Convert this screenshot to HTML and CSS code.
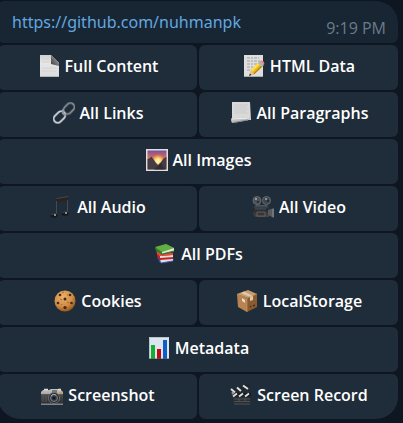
FILE: index.html
```html
<!DOCTYPE html>
<html lang="en">
<head>
<meta charset="utf-8">
<meta name="viewport" content="width=device-width, initial-scale=1">
<title>Scraper bot chat</title>
<link rel="stylesheet" href="styles.css">
</head>
<body>
<main class="chat">
  <article class="message">
    <a class="link" href="https://github.com/nuhmanpk">https://github.com/nuhmanpk</a>
    <time class="time" datetime="21:19">9:19 PM</time>
  </article>
  <div class="keyboard">
    <button type="button" class="key">
      <svg class="icon" viewBox="0 0 22 22" aria-hidden="true">
        <defs><linearGradient id="paper" x1="0" y1="0" x2="0" y2="1"><stop offset="0" stop-color="#cfcfcf"/><stop offset=".35" stop-color="#e6e6e6"/><stop offset="1" stop-color="#dcdcdc"/></linearGradient>
        <linearGradient id="fold" x1="0" y1="1" x2="1" y2="0"><stop offset="0" stop-color="#3c3c3c"/><stop offset=".5" stop-color="#777"/><stop offset="1" stop-color="#c8c8c8"/></linearGradient></defs>
        <path d="M2 0H13L21 8V22H2z" fill="url(#paper)"/>
        <path d="M4 4h7M4 7h8M4 13h14M4 16h14" stroke="#d2d2d2"/>
        <path d="M13 0L21 8V11L13 9z" fill="url(#fold)"/>
        <path d="M2 21.500H21" stroke="#b5b5b5"/>
      </svg>
      <span>Full Content</span>
    </button>
    <button type="button" class="key">
      <svg class="icon" viewBox="0 0 22 22" aria-hidden="true">
        <path d="M1 0H20V22H1z" fill="#dedede"/>
        <path d="M1 21.500H20" stroke="#aaa"/>
        <path d="M4 3h12M4 6h13M4 9h11M4 12h7M4 15h5" stroke="#a0a0a0" stroke-dasharray="3 1 2 1"/>
        <path d="M6 21L8 15L16 7L20 11L11 19z" fill="#e9b91c"/>
        <path d="M8 15L16 7L17.500 8.500L9 17z" fill="#ffdf55"/>
        <path d="M10 19L19 10L20 11L11 19.500z" fill="#b77b0c"/>
        <path d="M6 21L8 15L11 19z" fill="#e3c295"/><path d="M6 21L7 18.500L8.500 20z" fill="#333"/>
        <path d="M15 8L17 6L21 10L19 12z" fill="#aab4bd"/>
        <path d="M17 6Q19 5 20.500 6.500T21 10z" fill="#ee7d83"/>
      </svg>
      <span>HTML Data</span>
    </button>
    <button type="button" class="key">
      <svg class="icon" viewBox="0 0 22 22" aria-hidden="true">
        <g fill="none" stroke-linecap="round">
          <rect x="10" y="2.500" width="12" height="8" rx="4" transform="rotate(-45 16 6.500)" stroke="#555d66" stroke-width="2.600"/>
          <rect x="10" y="2.500" width="12" height="8" rx="4" transform="rotate(-45 16 6.500)" stroke="#8f969d" stroke-width="1"/>
          <rect x="0" y="11" width="13" height="8" rx="4" transform="rotate(-45 6.500 15)" stroke="#858d95" stroke-width="2.400"/>
          <rect x="0" y="11" width="13" height="8" rx="4" transform="rotate(-45 6.500 15)" stroke="#d0d4d8" stroke-width="1.200"/>
          <path d="M10 8Q9 12 12 13" stroke="#8f969d" stroke-width="2"/>
        </g>
      </svg>
      <span>All Links</span>
    </button>
    <button type="button" class="key">
      <svg class="icon" viewBox="0 0 22 22" aria-hidden="true">
        <path d="M2 0H20L21 18H2z" fill="#d9d9d9"/>
        <path d="M4 3h14M4 5h13M4 7h14M4 9h12M4 11h14" stroke="#cbcbcb"/>
        <path d="M1 17Q1 15.500 3 16L20 15.500Q21 18 19 18L3 21Q1 21 1 17z" fill="#c0c0c0"/>
        <path d="M2 17L19 16" stroke="#f0f0f0"/><path d="M3 20.500L18 18" stroke="#888"/>
      </svg>
      <span>All Paragraphs</span>
    </button>
    <button type="button" class="key wide">
      <svg class="icon" viewBox="0 0 22 22" aria-hidden="true">
        <defs><linearGradient id="sky" x1="0" y1="0" x2="0" y2="1"><stop offset="0" stop-color="#76539a"/><stop offset=".3" stop-color="#c56565"/><stop offset=".55" stop-color="#f58b3c"/><stop offset="1" stop-color="#e9a552"/></linearGradient>
        <radialGradient id="sun"><stop offset="0" stop-color="#fffbd0"/><stop offset=".4" stop-color="#ffd875"/><stop offset="1" stop-color="#ff9d3b" stop-opacity="0"/></radialGradient></defs>
        <path d="M0 0H22V22H0z" fill="#e1dde3"/><path d="M1.500 1.500H20.500V20.500H1.500z" fill="url(#sky)"/>
        <circle cx="12" cy="12" r="7" fill="url(#sun)"/>
        <path d="M1.500 10L4 9L5.500 7.500L8 11L10 14L12 16L15 13L18 9L20.500 8V20.500H1.500z" fill="#433b46"/>
        <path d="M8 20.500L12 17L15 14L17 18L19 20.500z" fill="#302c37"/>
      </svg>
      <span>All Images</span>
    </button>
    <button type="button" class="key">
      <svg class="icon" viewBox="0 0 22 22" aria-hidden="true">
        <path d="M6 2L18 0V17H16.500V5L7.500 6V19H6z" fill="#24272b"/>
        <path d="M6 2L18 0V5L6.500 6.500z" fill="#292424"/><path d="M6.500 2.500L18 .5" stroke="#4e4846"/>
        <path d="M6.500 5V19M17.500 4V17" stroke="#555b60" stroke-width=".7"/>
        <ellipse cx="4" cy="19.500" rx="3.500" ry="2.300" fill="#15191d"/><ellipse cx="15" cy="17.500" rx="3.500" ry="2.300" fill="#15191d"/>
        <path d="M1 19Q3 17 6 18M12 17Q14 15 17 16" fill="none" stroke="#555c61" stroke-width=".7"/><circle cx="5" cy="19" r="1" fill="#abb1b5"/><circle cx="16" cy="17" r="1" fill="#abb1b5"/>
      </svg>
      <span>All Audio</span>
    </button>
    <button type="button" class="key">
      <svg class="icon" viewBox="0 0 22 22" aria-hidden="true">
        <defs><linearGradient id="film" x1="0" y1="0" x2="0" y2="1"><stop offset="0" stop-color="#58616a"/><stop offset=".4" stop-color="#23282e"/><stop offset="1" stop-color="#4e4645"/></linearGradient></defs>
        <circle cx="5" cy="4.500" r="4" fill="#4c5157" stroke="#62696f"/><circle cx="14.500" cy="4.500" r="4" fill="#41464c" stroke="#62696f"/>
        <circle cx="4" cy="3" r="1" fill="#aab0b5"/><circle cx="6" cy="6" r="1" fill="#1e252b"/><circle cx="14" cy="3" r="1" fill="#a3a9ae"/><circle cx="16" cy="5" r="1" fill="#1e252b"/>
        <path d="M2 11Q5 7 9 9H15L17 12V21H4Q1 20 1 15z" fill="url(#film)"/>
        <path d="M16 14L22 12V22L16 19z" fill="#555b61"/><path d="M21 13V21" stroke="#8a9096"/>
        <path d="M3 13H14" stroke="#4b555d"/><path d="M5 16H13V20H5z" fill="#393537" stroke="#77706f" stroke-width=".7"/>
      </svg>
      <span>All Video</span>
    </button>
    <button type="button" class="key wide">
      <svg class="icon" viewBox="0 0 22 22" aria-hidden="true">
        <path d="M3 14L15 12L20 16L19 18L7 20L4 17z" fill="#32448c"/><path d="M6 16L19 15V18L7 20z" fill="#dce0e7"/><path d="M5 18L7 20L19 18" fill="none" stroke="#4c58a3"/>
        <path d="M3 9L16 9L19 12V16L6 17L3 13z" fill="#c92320"/><path d="M6 13L19 12V14L6 15z" fill="#e7dddb"/><path d="M3 9L6 12L19 11" fill="none" stroke="#ed4a3e" stroke-width="2"/>
        <path d="M1 5L12 1L20 5V9L8 12L2 8z" fill="#337f25"/><path d="M1 4L12 1L20 5L8 9z" fill="#64ad43"/><path d="M8 9L20 5V8L8 11z" fill="#e3e8d9"/><path d="M8 11L20 8" stroke="#377b2a"/>
      </svg>
      <span>All PDFs</span>
    </button>
    <button type="button" class="key">
      <svg class="icon" viewBox="0 0 22 22" aria-hidden="true">
        <defs><radialGradient id="cookie" cx=".4" cy=".3" r=".7"><stop offset="0" stop-color="#e9b168"/><stop offset=".65" stop-color="#cf8d46"/><stop offset="1" stop-color="#9a5a20"/></radialGradient></defs>
        <circle cx="11" cy="11" r="10.500" fill="url(#cookie)"/>
        <g fill="#4b2512"><circle cx="6" cy="5" r="1.300"/><circle cx="16" cy="5" r="1.300"/><circle cx="11" cy="9" r="1.500"/><circle cx="4" cy="13" r="1.300"/><circle cx="17.500" cy="13" r="1.300"/><circle cx="11" cy="17.500" r="1.600"/></g>
        <path d="M8 3l2-1M6 9l2 1M13 12l2 1M7 15l1-1M13 5h1M19 9h1" stroke="#a5672f"/>
      </svg>
      <span>Cookies</span>
    </button>
    <button type="button" class="key">
      <svg class="icon" viewBox="0 0 22 22" aria-hidden="true">
        <path d="M1 4L12 0L21 4L12 8z" fill="#c89c6f"/><path d="M1 4L11 8V22L2 17z" fill="#b98351"/><path d="M11 8L21 4V17L11 22z" fill="#8a5b31"/>
        <path d="M5 3L8 1.500L17 6V10L14 11V7z" fill="#dec9ab"/><path d="M1 4L11 8L21 4M11 8V22" fill="none" stroke="#c79c6c" stroke-width=".6"/>
        <path d="M6 8L9 10V13L6 11z" fill="#e5ddd2"/><path d="M14 17l1-1M17 16l2-1" stroke="#4b301c" stroke-width="1.500"/>
      </svg>
      <span>LocalStorage</span>
    </button>
    <button type="button" class="key wide">
      <svg class="icon" viewBox="0 0 22 22" aria-hidden="true">
        <path d="M1 0H21V22H1z" fill="#dce4ee"/><path d="M1.500 22V.5H20.500" fill="none" stroke="#b9c3cd"/>
        <path d="M3 8H7V22H3z" fill="#12ae31"/><path d="M9 12H13V22H9z" fill="#bd0712"/><path d="M15 3H19V22H15z" fill="#0b5ec4"/>
        <path d="M1 21.500H21" stroke="#53636e" stroke-opacity=".5"/>
      </svg>
      <span>Metadata</span>
    </button>
    <button type="button" class="key corner-left">
      <svg class="icon" viewBox="0 0 22 22" aria-hidden="true">
        <defs><linearGradient id="camera" x1="0" y1="0" x2="0" y2="1"><stop offset="0" stop-color="#c5c6c5"/><stop offset=".3" stop-color="#aaa"/><stop offset=".35" stop-color="#4b4b4b"/><stop offset=".85" stop-color="#303236"/><stop offset="1" stop-color="#999"/></linearGradient></defs>
        <path d="M2 6H8L10 5H17L18 6H20L22 8V21H0V8z" fill="url(#camera)"/><path d="M3 5.500H7M17 5.500H20" stroke="#dedede" stroke-width="1.500"/>
        <path d="M11 6H16V9H11z" fill="#757675"/><path d="M18 8H21V10H18z" fill="#c9a33e"/>
        <circle cx="13" cy="14" r="5.500" fill="#25282c" stroke="#6d7175"/><circle cx="13" cy="14" r="3.500" fill="#343b43" stroke="#7b8186"/><circle cx="13" cy="14" r="1.500" fill="#101920"/><path d="M10 12Q12 9 15 11" fill="none" stroke="#a7adb2"/>
        <path d="M2 11V18M5 11V18" stroke="#575757"/>
      </svg>
      <span>Screenshot</span>
    </button>
    <button type="button" class="key corner-right">
      <svg class="icon" viewBox="0 0 22 22" aria-hidden="true">
        <path d="M0 6L19 0L20 4L3 10z" fill="#24272a"/><path d="M1 5L5 8.500M7 3.500L11 7M13 1.500L18 5" stroke="#e0e1e2" stroke-width="2"/>
        <path d="M2 10H21V21H3z" fill="#292d31"/><path d="M3 9H21V12.500H3z" fill="#16191c"/><path d="M3 12.500L7 9.500M9 12.500L13 9.500M15 12.500L19 9.500" stroke="#dddfe0" stroke-width="2"/>
        <path d="M4 15H20M4 17.500H20M4 20H20M9 15V17M15 15V17" stroke="#565c60" stroke-width=".8"/><circle cx="3" cy="9" r="1.500" fill="#94999c"/>
      </svg>
      <span>Screen Record</span>
    </button>
  </div>
</main>
</body>
</html>
```
FILE: styles.css
```css
* {
  box-sizing: border-box;
}

body {
  margin: 0;
  background: #0e1621;
  font-family: "Open Sans", "Noto Sans", sans-serif;
  font-size: 16px;
}

.chat {
  display: flex;
  flex-direction: column;
  gap: 2px;
  margin: 1px 5px 4px -2px;
}

.message {
  display: flex;
  justify-content: space-between;
  padding: 8px 12px 3px 14px;
  min-height: 42px;
  border-radius: 6px 22px 6px 6px;
  background: #182533;
}

.link {
  color: #62a8e0;
  font-family: "Noto Sans", "Open Sans", sans-serif;
  line-height: 26px;
  text-decoration: none;
}

.time {
  align-self: flex-end;
  color: #6b7b89;
  line-height: 24px;
}

.keyboard {
  display: grid;
  grid-template-columns: 1fr 1fr;
  gap: 2px;
}

.key {
  display: flex;
  align-items: center;
  justify-content: center;
  gap: 5px;
  height: 45px;
  padding: 0 4px 3px 5px;
  border: 0;
  border-radius: 6px;
  background: #1f2c39;
  color: #fff;
  font: inherit;
  font-weight: 600;
  white-space: nowrap;
  cursor: pointer;
}

.key:hover {
  background: #263544;
}

.wide {
  grid-column: 1 / -1;
}

.corner-left {
  border-bottom-left-radius: 22px;
}

.corner-right {
  border-bottom-right-radius: 22px;
}

.icon {
  flex: none;
  width: 22px;
  height: 22px;
}
```
